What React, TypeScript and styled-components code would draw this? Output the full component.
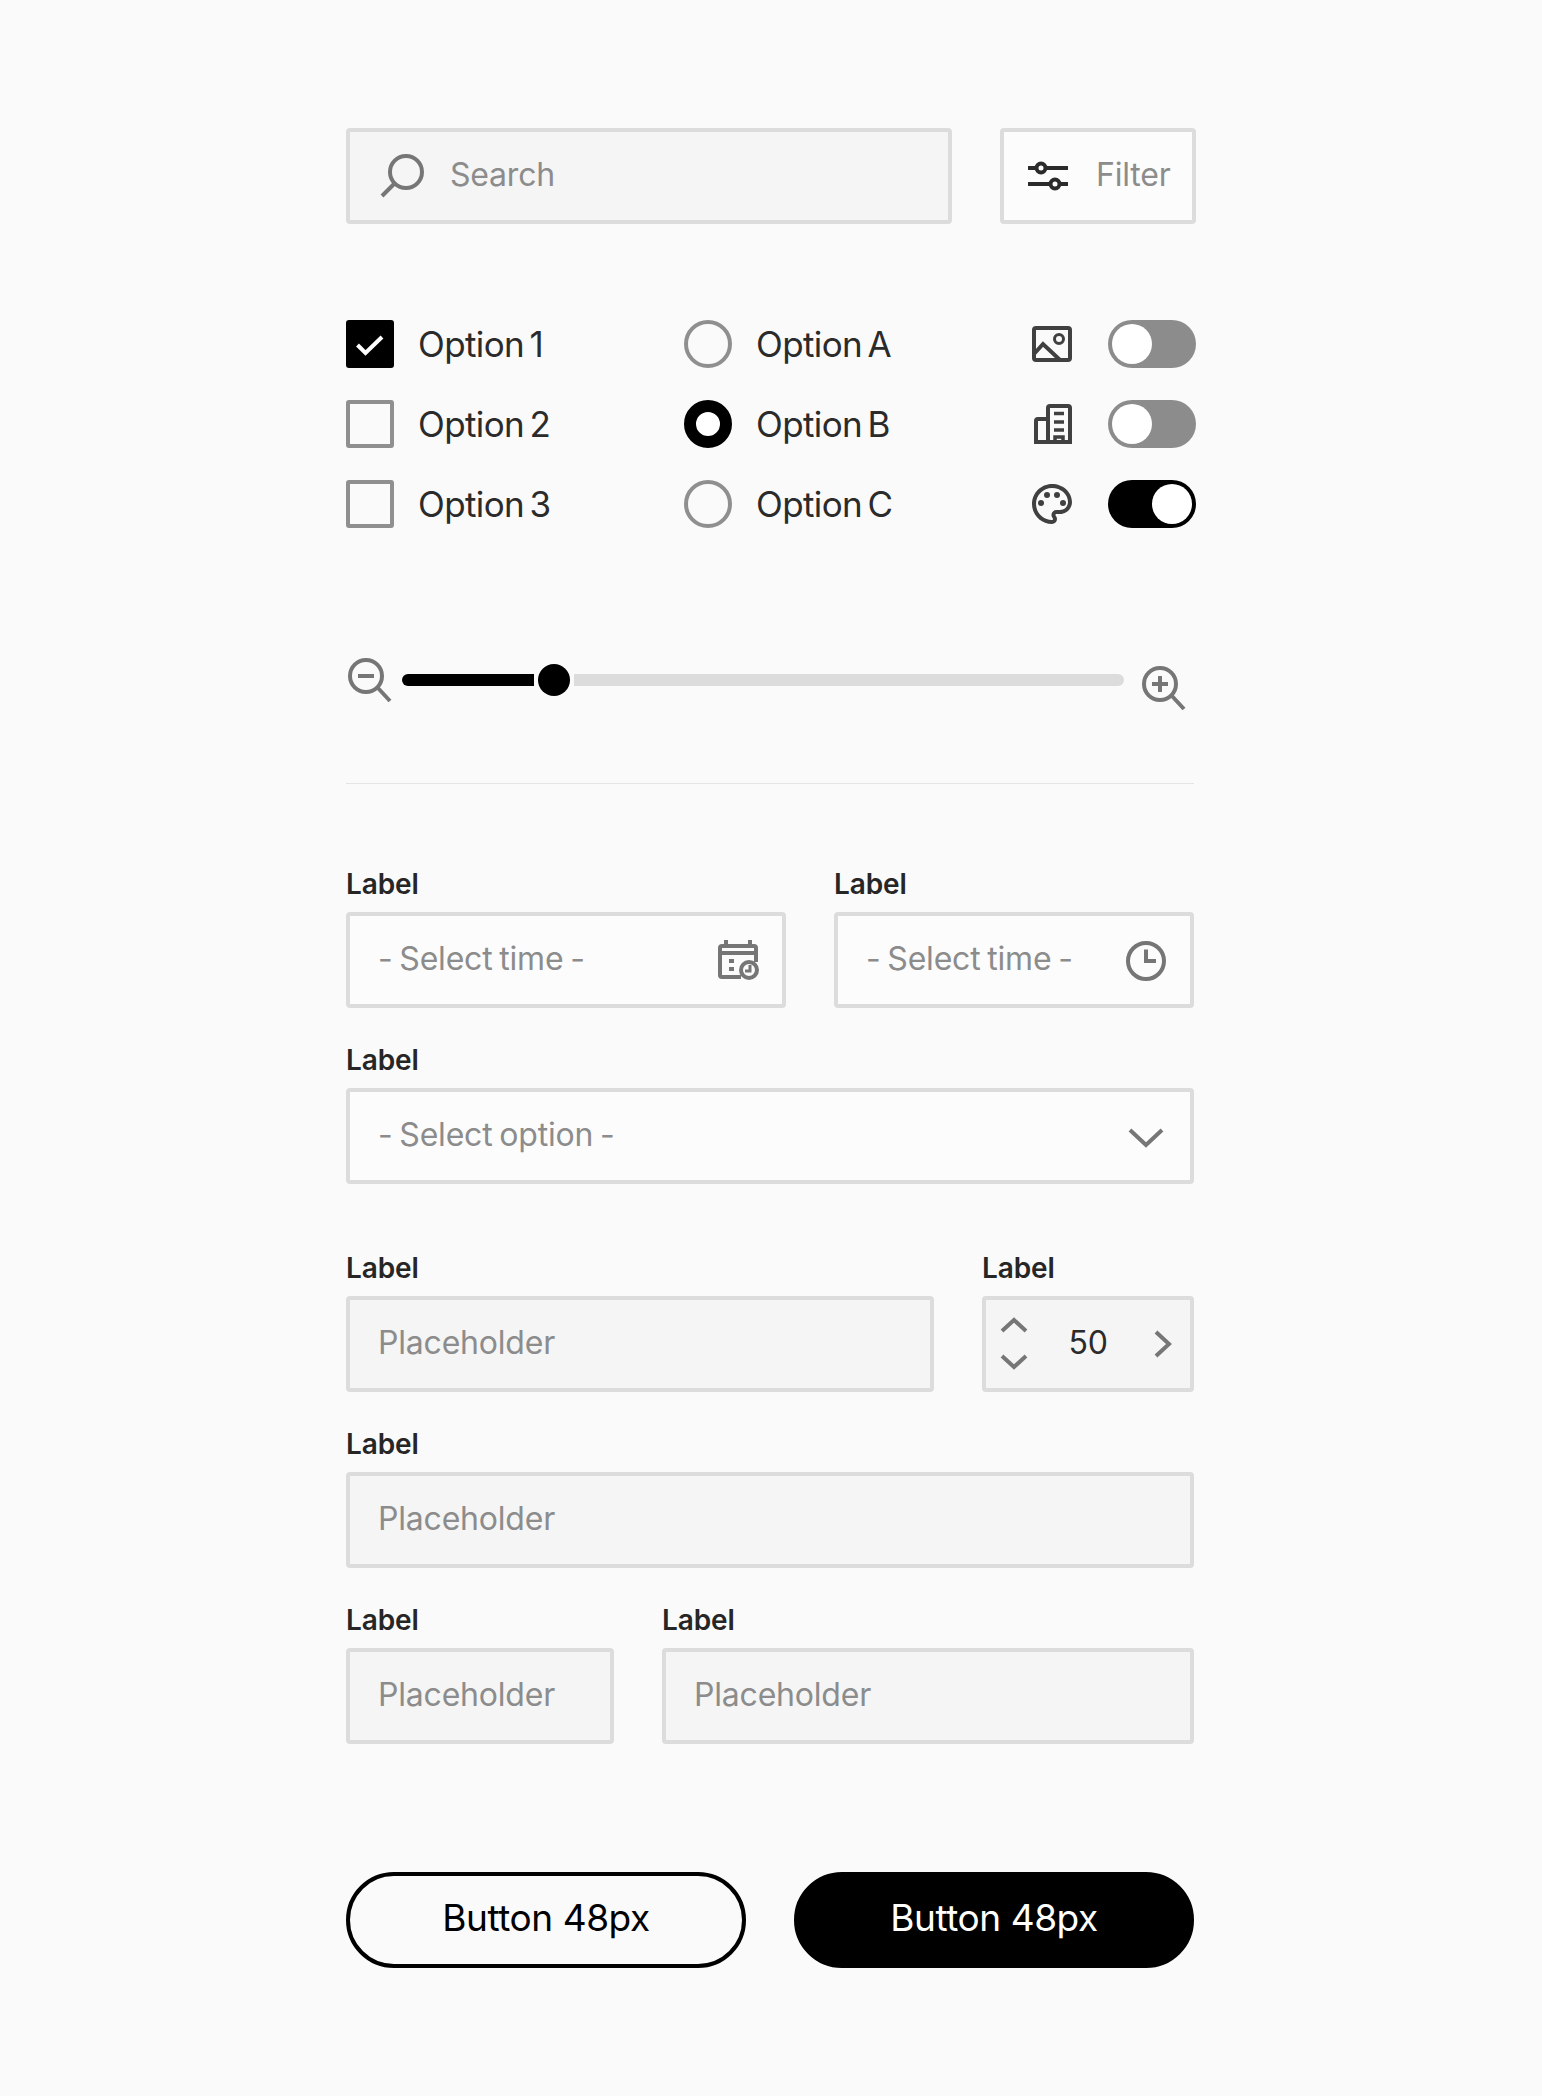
import React from 'react';
import styled, { createGlobalStyle } from 'styled-components';
import { MdOutlinePalette } from 'react-icons/md';

const Global = createGlobalStyle`
  html, body {
    margin: 0;
    padding: 0;
    background: #fafafa;
  }
  * {
    box-sizing: border-box;
  }
`;

const Page = styled.div`
  width: 1542px;
  height: 2096px;
  padding: 128px 346px 0;
  font-family: Inter, 'Liberation Sans', sans-serif;
  color: #2b2b2b;
`;

const SearchRow = styled.div`
  display: flex;
  gap: 48px;
  width: 850px;
`;

const Box = styled.div<{ $filled?: boolean; $width?: number; $between?: boolean }>`
  display: flex;
  align-items: center;
  justify-content: ${(p) => (p.$between ? 'space-between' : 'flex-start')};
  flex: ${(p) => (p.$width ? `0 0 ${p.$width}px` : '1 1 0')};
  height: 96px;
  padding: 0 20px;
  border: 4px solid #dcdcdc;
  border-radius: 4px;
  background: ${(p) => (p.$filled ? '#f5f5f5' : '#fcfcfc')};
  font-size: 32px;
  letter-spacing: -0.2px;
  word-spacing: -2px;
  color: #8c8c8c;
`;

const BoxText = styled.span`
  padding-bottom: 3px;
`;

const SearchBox = styled(Box)`
  padding-left: 28px;
  gap: 24px;
`;

const FilterBox = styled(Box)`
  gap: 24px;
`;

const StepperBox = styled(Box)`
  padding: 0 4px;
  color: #2b2b2b;
`;

const Icon = styled.svg<{ $color?: string }>`
  flex: none;
  width: 48px;
  height: 48px;
  fill: none;
  stroke: ${(p) => p.$color || '#767676'};
  stroke-width: 4;
`;

const OptionsGrid = styled.div`
  display: grid;
  grid-template-columns: 338px 344px 1fr;
  margin-top: 96px;
  width: 850px;
`;

const OptionColumn = styled.div`
  display: flex;
  flex-direction: column;
  gap: 32px;
`;

const OptionRow = styled.div`
  display: flex;
  align-items: center;
  gap: 24px;
  height: 48px;
  font-size: 35px;
  letter-spacing: -0.6px;
  word-spacing: -4px;
`;

const ToggleRow = styled(OptionRow)`
  gap: 32px;
`;

const Checkbox = styled.span<{ $checked?: boolean }>`
  flex: none;
  display: block;
  width: 48px;
  height: 48px;
  border: ${(p) => (p.$checked ? '0' : '4px solid #8f8f8f')};
  border-radius: 3px;
  background: ${(p) => (p.$checked ? '#000' : 'transparent')};
`;

const Radio = styled.span<{ $checked?: boolean }>`
  flex: none;
  width: 48px;
  height: 48px;
  border-radius: 50%;
  border: ${(p) => (p.$checked ? '12px solid #000' : '4px solid #8f8f8f')};
  background: ${(p) => (p.$checked ? '#fff' : 'transparent')};
`;

const Toggle = styled.span<{ $on?: boolean }>`
  display: flex;
  justify-content: ${(p) => (p.$on ? 'flex-end' : 'flex-start')};
  width: 88px;
  height: 48px;
  padding: 4px;
  border-radius: 24px;
  background: ${(p) => (p.$on ? '#000' : '#8c8c8c')};
`;

const Knob = styled.span`
  width: 40px;
  height: 40px;
  border-radius: 50%;
  background: #fff;
`;

const PaletteIcon = styled(MdOutlinePalette)`
  flex: none;
  width: 48px;
  height: 48px;
  color: #404040;
`;

const SliderRow = styled.div`
  display: flex;
  align-items: flex-start;
  margin-top: 128px;
  width: 848px;
  height: 56px;
`;

const ZoomIcon = styled(Icon)<{ $lower?: boolean }>`
  margin-top: ${(p) => (p.$lower ? '8px' : '0')};
  margin-left: ${(p) => (p.$lower ? '16px' : '-2px')};
`;

const Track = styled.div`
  display: flex;
  align-items: center;
  flex: 0 0 722px;
  height: 48px;
  margin-left: 10px;
`;

const TrackFill = styled.span`
  width: 132px;
  height: 12px;
  border-radius: 6px 0 0 6px;
  background: #000;
`;

const Thumb = styled.span`
  flex: none;
  width: 32px;
  height: 32px;
  margin: 0 4px;
  border-radius: 50%;
  background: #000;
`;

const TrackRest = styled.span`
  flex: 1;
  height: 12px;
  border-radius: 0 6px 6px 0;
  background: #dcdcdc;
`;

const Divider = styled.div`
  width: 848px;
  height: 1px;
  margin-top: 71px;
  background: #e4e4e4;
`;

const Form = styled.div`
  display: flex;
  flex-direction: column;
  width: 848px;
  margin-top: 80px;
`;

const FieldRow = styled.div<{ $gapTop?: number }>`
  display: flex;
  gap: 48px;
  margin-top: ${(p) => p.$gapTop ?? 32}px;
`;

const Field = styled.div<{ $width?: number }>`
  display: flex;
  flex-direction: column;
  gap: 10px;
  flex: ${(p) => (p.$width ? `0 0 ${p.$width}px` : '1 1 0')};
`;

const Label = styled.label`
  margin-top: 2px;
  font-size: 28px;
  line-height: 36px;
  font-weight: 600;
  letter-spacing: -0.1px;
  color: #262626;
`;

const InputBox = styled(Box)`
  flex: none;
  width: 100%;
  padding: 0 20px 0 28px;
`;

const Value = styled(BoxText)`
  color: #2b2b2b;
`;

const StepColumn = styled.div`
  display: flex;
  flex-direction: column;
`;

const StepIcon = styled(Icon)`
  height: 36px;
`;

const ButtonRow = styled.div`
  display: flex;
  gap: 48px;
  width: 848px;
  margin-top: 128px;
`;

const PillButton = styled.button<{ $solid?: boolean }>`
  flex: 1;
  height: 96px;
  padding: 0 0 5px;
  border: 4px solid #000;
  border-radius: 48px;
  background: ${(p) => (p.$solid ? '#000' : 'transparent')};
  color: ${(p) => (p.$solid ? '#fff' : '#000')};
  font-family: inherit;
  font-size: 37px;
  letter-spacing: -0.43px;
`;

const BuildingIcon = () => (
  <Icon viewBox="0 0 48 48" $color="#404040">
    <path d="M20 42V8a2 2 0 0 1 2-2h18a2 2 0 0 1 2 2v34zM20 19H10a2 2 0 0 0-2 2v21h12" />
    <path d="M26 13.5h10M26 22h10M26 30h10M27 42v-5h8v5" strokeWidth="3.5" />
  </Icon>
);

const CalendarIcon = () => (
  <Icon viewBox="0 0 48 48">
    <path d="M27 41H8a2 2 0 0 1-2-2V12a2 2 0 0 1 2-2h32a2 2 0 0 1 2 2v14M6 17h36M12 4v6M36 4v6" />
    <path d="M15 25h5M15 33h5" />
    <circle cx="35" cy="34" r="8" fill="#fcfcfc" />
    <path d="M36 29v6h-5" strokeWidth="3" />
  </Icon>
);

const options = ['Option 1', 'Option 2', 'Option 3'];
const radios = ['Option A', 'Option B', 'Option C'];

const App: React.FC = () => {
  return (
    <Page>
      <Global />
      <SearchRow>
        <SearchBox $filled>
          <Icon viewBox="0 0 48 48">
            <circle cx="28" cy="20" r="16" />
            <path d="M16 32L4 44" />
          </Icon>
          <BoxText>Search</BoxText>
        </SearchBox>
        <FilterBox $width={196}>
          <Icon viewBox="0 0 48 48" $color="#2b2b2b">
            <path d="M4 16h8.5M21.5 16H44M4 32h22.500M35.500 32H44" />
            <circle cx="17" cy="16" r="4.500" />
            <circle cx="31" cy="32" r="4.500" />
          </Icon>
          <BoxText>Filter</BoxText>
        </FilterBox>
      </SearchRow>

      <OptionsGrid>
        <OptionColumn>
          {options.map((o, i) => (
            <OptionRow key={o}>
              <Checkbox $checked={i === 0}>
                {i === 0 && (
                  <Icon viewBox="0 0 48 48" $color="#fff">
                    <path d="M11.500 25L19.500 33L36 17" />
                  </Icon>
                )}
              </Checkbox>
              {o}
            </OptionRow>
          ))}
        </OptionColumn>
        <OptionColumn>
          {radios.map((o, i) => (
            <OptionRow key={o}>
              <Radio $checked={i === 1} />
              {o}
            </OptionRow>
          ))}
        </OptionColumn>
        <OptionColumn>
          <ToggleRow>
            <Icon viewBox="0 0 48 48" $color="#404040">
              <rect x="6" y="8" width="36" height="32" rx="2" />
              <circle cx="31" cy="19" r="4.500" strokeWidth="3" />
              <path d="M6 34L15 24L32 40" />
            </Icon>
            <Toggle>
              <Knob />
            </Toggle>
          </ToggleRow>
          <ToggleRow>
            <BuildingIcon />
            <Toggle>
              <Knob />
            </Toggle>
          </ToggleRow>
          <ToggleRow>
            <PaletteIcon />
            <Toggle $on>
              <Knob />
            </Toggle>
          </ToggleRow>
        </OptionColumn>
      </OptionsGrid>

      <SliderRow>
        <ZoomIcon viewBox="0 0 48 48">
          <circle cx="22" cy="20" r="16" />
          <path d="M33.500 31.500L46 45M14 20h16" />
        </ZoomIcon>
        <Track>
          <TrackFill />
          <Thumb />
          <TrackRest />
        </Track>
        <ZoomIcon viewBox="0 0 48 48" $lower>
          <circle cx="20" cy="20" r="16" />
          <path d="M31.500 31.500L44 45M12 20h16M20 12v16" />
        </ZoomIcon>
      </SliderRow>

      <Divider />

      <Form>
        <FieldRow $gapTop={0}>
          <Field $width={440}>
            <Label>Label</Label>
            <InputBox $between>
              <BoxText>- Select time -</BoxText>
              <CalendarIcon />
            </InputBox>
          </Field>
          <Field>
            <Label>Label</Label>
            <InputBox $between>
              <BoxText>- Select time -</BoxText>
              <Icon viewBox="0 0 48 48">
                <circle cx="24" cy="25" r="18" />
                <path d="M24 13.500V25h10" />
              </Icon>
            </InputBox>
          </Field>
        </FieldRow>
        <FieldRow>
          <Field>
            <Label>Label</Label>
            <InputBox $between>
              <BoxText>- Select option -</BoxText>
              <Icon viewBox="0 0 48 48">
                <path d="M8 18L24 33L40 18" />
              </Icon>
            </InputBox>
          </Field>
        </FieldRow>
        <FieldRow $gapTop={64}>
          <Field>
            <Label>Label</Label>
            <InputBox $filled>
              <BoxText>Placeholder</BoxText>
            </InputBox>
          </Field>
          <Field $width={212}>
            <Label>Label</Label>
            <StepperBox $filled $between $width={96}>
              <StepColumn>
                <StepIcon viewBox="0 0 48 36">
                  <path d="M12 23L24 12L36 23" />
                </StepIcon>
                <StepIcon viewBox="0 0 48 36">
                  <path d="M12 12L24 23L36 12" />
                </StepIcon>
              </StepColumn>
              <Value>50</Value>
              <Icon viewBox="0 0 48 48">
                <path d="M18 12L31 24L18 36" />
              </Icon>
            </StepperBox>
          </Field>
        </FieldRow>
        <FieldRow>
          <Field>
            <Label>Label</Label>
            <InputBox $filled>
              <BoxText>Placeholder</BoxText>
            </InputBox>
          </Field>
        </FieldRow>
        <FieldRow>
          <Field $width={268}>
            <Label>Label</Label>
            <InputBox $filled>
              <BoxText>Placeholder</BoxText>
            </InputBox>
          </Field>
          <Field>
            <Label>Label</Label>
            <InputBox $filled>
              <BoxText>Placeholder</BoxText>
            </InputBox>
          </Field>
        </FieldRow>
      </Form>

      <ButtonRow>
        <PillButton>Button 48px</PillButton>
        <PillButton $solid>Button 48px</PillButton>
      </ButtonRow>
    </Page>
  );
};

export default App;
